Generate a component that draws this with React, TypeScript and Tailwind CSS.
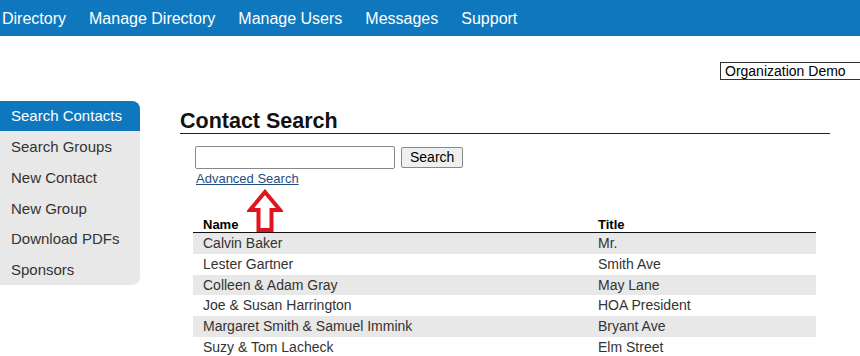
import React from "react";

const rows = [
  ["Calvin Baker", "Mr."],
  ["Lester Gartner", "Smith Ave"],
  ["Colleen & Adam Gray", "May Lane"],
  ["Joe & Susan Harrington", "HOA President"],
  ["Margaret Smith & Samuel Immink", "Bryant Ave"],
  ["Suzy & Tom Lacheck", "Elm Street"],
];

const side = ["Search Groups", "New Contact", "New Group", "Download PDFs", "Sponsors"];

export default function App() {
  return (
    <div className="w-[860px] h-[356px] overflow-hidden bg-white text-[#333]" style={{ fontFamily: '"Liberation Sans", Arial, sans-serif' }}>
      <nav className="h-[36px] bg-[#0e77bd] flex items-center pl-[2px] gap-[23px] text-white text-[16px] pt-[1px]">
        <span>Directory</span>
        <span>Manage Directory</span>
        <span>Manage Users</span>
        <span>Messages</span>
        <span>Support</span>
      </nav>
      <div className="flex justify-end pt-[26px]">
        <div className="w-[150px] h-[18px] border border-[#333] text-[14px] leading-[16px] pl-[4px] text-black -mr-[10px]">Organization Demo</div>
      </div>
      <div className="flex mt-[21px]">
        <div className="w-[140px] h-[184px] bg-[#e8e8e8] rounded-r-[8px] text-[15px] shrink-0">
          <div className="h-[30px] bg-[#0e77bd] text-white rounded-tr-[8px] pl-[11px] leading-[30px]">Search Contacts</div>
          {side.map((s) => (
            <div key={s} className="h-[30.8px] pl-[11px] leading-[31px] text-[#333]">{s}</div>
          ))}
        </div>
        <div className="ml-[40px] w-[650px]">
          <h1 className="text-[21.5px] font-bold text-[#111] leading-[24px] pt-[8px] pb-[0px] border-b border-[#222]">Contact Search</h1>
          <div className="pl-[15px] pt-[12px] flex items-center gap-[6px]">
            <input className="w-[200px] h-[23px] border border-[#888] rounded-[2px] bg-white" />
            <button className="h-[21px] px-[8px] border border-[#888] rounded-[2px] bg-[#efefef] text-[14px] text-black leading-[19px]">Search</button>
          </div>
          <div className="pl-[16px] text-[13px] leading-[15px] pt-[2px]">
            <span className="text-[#1f4f7f] underline">Advanced Search</span>
          </div>
          <div className="relative pl-[13px] mt-[25px] w-[636px]">
            <svg className="absolute left-[67px] -top-[22px]" width="36" height="44" viewBox="0 0 36 44">
              <path d="M18 3 L33 21 L24.5 21 L24.5 41 L11.5 41 L11.5 21 L3 21 Z" fill="white" stroke="#e0141e" strokeWidth="4" strokeLinejoin="miter" />
            </svg>
            <div className="flex text-[13px] font-bold text-black h-[22px] items-end leading-[14px] pb-0 border-b border-[#111]">
              <span className="pl-[10px] w-[405px]">Name</span>
              <span>Title</span>
            </div>
            {rows.map((r, i) => (
              <div key={i} className={`flex h-[20.8px] items-center text-[14px] text-[#333] ${i % 2 === 0 ? "bg-[#e8e8e8]" : "bg-white"}`}>
                <span className="pl-[10px] w-[405px]">{r[0]}</span>
                <span>{r[1]}</span>
              </div>
            ))}
          </div>
        </div>
      </div>
    </div>
  );
}
